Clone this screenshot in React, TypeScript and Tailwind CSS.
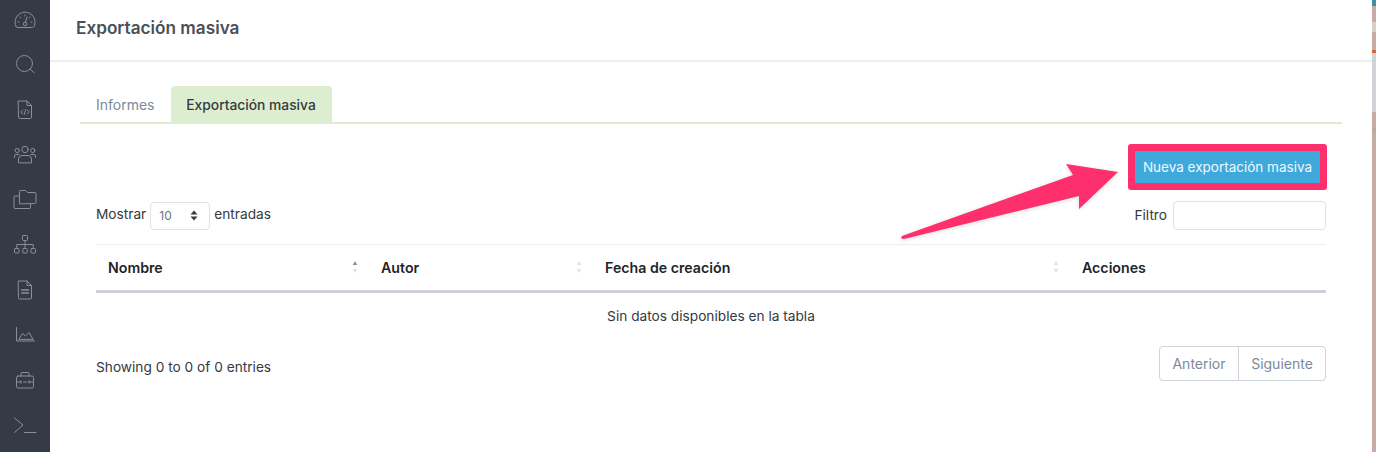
import React from "react";

const NavIcon = ({ children }: { children: React.ReactNode }) => {
  return (
    <div className="flex h-[45px] items-center justify-center">
      <svg
        width="24"
        height="24"
        viewBox="0 0 24 24"
        fill="none"
        stroke="#8a8f99"
        strokeWidth="1"
        strokeLinecap="round"
        strokeLinejoin="round"
      >
        {children}
      </svg>
    </div>
  );
};

const SortArrows = ({ up }: { up?: boolean }) => {
  return (
    <svg width="6" height="14" viewBox="0 0 6 14">
      <path d="M3 1 L5.2 5 L0.8 5 Z" fill={up ? "#868e96" : "#dee2e6"} />
      <path d="M3 13 L5.2 9 L0.8 9 Z" fill="#dee2e6" />
    </svg>
  );
};

const columns = [
  { name: "Nombre", up: true },
  { name: "Autor" },
  { name: "Fecha de creación" },
  { name: "Acciones", hideSort: true },
];

const App = () => {
  return (
    <div className="relative flex h-[452px] w-[1376px] overflow-hidden bg-white font-['Inter',sans-serif] text-[13.7px] text-[#343a40]">
      {/* sidebar */}
      <aside className="w-[50px] shrink-0 bg-[#343a46]">
        <div className="-mt-[3px]">
          <NavIcon>
            <path d="M3 18.5 A10 10 0 1 1 21 18.5 Q20.5 19.5 19.5 19.5 H4.5 Q3.5 19.5 3 18.5 Z" />
            <circle cx="12" cy="16" r="1.8" />
            <path d="M12.5 14.2 L14 9 M12 7 V8 M7 9 L7.7 9.7 M17 9 L16.3 9.7 M5 14 H6 M18 14 H19" />
          </NavIcon>
          <NavIcon>
            <circle cx="11.5" cy="10.5" r="8" />
            <path d="M17.3 16 L21 19.8" />
          </NavIcon>
          <NavIcon>
            <path d="M5.5 3 H14 L18.5 7.5 V19.5 Q18.5 20.5 17.5 20.5 H6.5 Q5.5 20.5 5.5 19.5 Z M14 3 V7.5 H18.5" />
            <path d="M9.7 12 L7.8 14 L9.7 16 M14.3 12 L16.2 14 L14.3 16 M12.7 11.5 L11.3 16.5" />
          </NavIcon>
          <NavIcon>
            <circle cx="12" cy="6.5" r="3.2" />
            <circle cx="4.2" cy="7.5" r="2.1" />
            <circle cx="19.8" cy="7.5" r="2.1" />
            <path d="M5.5 19.5 V16 Q5.5 12.5 9 12.5 H15 Q18.5 12.5 18.5 16 V19.5 Z" />
            <path d="M1.5 14.5 V13 Q1.5 11.5 3 11.5 H6 M22.5 14.5 V13 Q22.5 11.5 21 11.5 H18" />
          </NavIcon>
          <NavIcon>
            <path d="M6.5 15.5 V3.5 Q6.5 2.5 7.5 2.5 H12.5 L14.5 4.5 H22 Q23 4.5 23 5.5 V14.5 Q23 15.5 22 15.5 Z" />
            <path d="M6.5 8 H2 Q1 8 1 9 V19.5 Q1 20.5 2 20.5 H16.5 Q17.5 20.5 17.5 19.5 V15.5" />
          </NavIcon>
          <NavIcon>
            <rect x="9.5" y="2.5" width="5" height="5" rx="0.8" />
            <rect x="1.5" y="15.5" width="4.5" height="4.5" rx="0.8" />
            <rect x="9.8" y="15.5" width="4.5" height="4.5" rx="0.8" />
            <rect x="18" y="15.5" width="4.5" height="4.5" rx="0.8" />
            <path d="M12 7.5 V15.5 M3.8 15.5 V11.5 H20.2 V15.5" />
          </NavIcon>
          <NavIcon>
            <path d="M5.5 3 H14 L18.5 7.5 V20 Q18.5 21 17.5 21 H6.5 Q5.5 21 5.5 20 Z M14 3 V7.5 H18.5" />
            <path d="M8.5 12 H15.5 M8.5 15 H15.5" strokeWidth="1.4" />
          </NavIcon>
          <NavIcon>
            <path d="M3.5 4.5 V18 H21.5" />
            <path d="M6 16 L9.5 10.5 L12.5 13 L16 9.5 L20 16 Z" />
          </NavIcon>
          <NavIcon>
            <path d="M8 8 V5.5 Q8 4.5 9 4.5 H15 Q16 4.5 16 5.5 V8" />
            <rect x="3.5" y="8" width="17" height="12" rx="1.5" />
            <path d="M3.5 14 H8 M10.5 14 H13.5 M16 14 H20.5 M8 12.8 V15.2 M16 12.8 V15.2" />
          </NavIcon>
          <NavIcon>
            <path d="M1.5 5 L10 12 L1.5 19.5 M11.5 19.5 H23" />
          </NavIcon>
        </div>
      </aside>

      <main className="w-[1322px] shrink-0">
        <header className="flex h-[62px] items-center border-b-2 border-[#eeeeee] pb-[5px] pl-[26px]">
          <h1 className="text-[17.2px] font-semibold text-[#495057]">Exportación masiva</h1>
        </header>

        <div className="px-[30px] pt-6">
          {/* tabs */}
          <div className="flex h-[38px] items-stretch border-b-2 border-[#dcedd0] pl-[16px]">
            <a className="flex items-center pr-4 text-[14px] text-[#7c8a9a]">Informes</a>
            <a className="flex w-[161px] items-center justify-center rounded-t bg-[#dcedd0] pt-[2px] text-[13.8px] font-medium text-[#343a40]">
              Exportación masiva
            </a>
          </div>

          <div className="px-4">
            <div className="mt-5 -mr-px flex justify-end">
              <button className="h-[46px] w-[199px] rounded-[3px] border-[7px] border-[#fe2f6d] bg-[#3fa9dc] pt-px text-center text-[13.5px] text-[#f0f8fd]">
                Nueva exportación masiva
              </button>
            </div>

            <div className="mt-[11px] flex h-[29px] items-center justify-between">
              <div className="flex items-center gap-1">
                <span className="pb-[2px]">Mostrar</span>
                <div className="flex h-[28px] w-[60px] items-center justify-between rounded border border-[#dee2e6] px-2 text-xs text-[#6c757d]">
                  <span>10</span>
                  <svg width="8" height="11" viewBox="0 0 8 11" className="mr-[3px]">
                    <path d="M4 0.5 L7.5 4.5 H0.5 Z M4 10.5 L7.5 6.5 H0.5 Z" fill="#343a40" />
                  </svg>
                </div>
                <span className="pb-[2px]">entradas</span>
              </div>
              <div className="flex items-center gap-[6px]">
                <span>Filtro</span>
                <div className="h-[29px] w-[153px] rounded border border-[#dee2e6]" />
              </div>
            </div>

            {/* table */}
            <div className="mt-[14px] border-t border-[#eeeeee]">
              <div className="grid h-[48px] grid-cols-[273px_224px_477px_256px] items-center border-b-[3px] border-[#ced2d8] font-semibold text-[#212529]">
                {columns.map((col) => {
                  return (
                    <div key={col.name} className="flex items-center justify-between pr-[11px] pl-3">
                      <span className="text-[14.2px]">{col.name}</span>
                      {!col.hideSort && <SortArrows up={col.up} />}
                    </div>
                  );
                })}
              </div>
              <div className="flex h-[48px] items-center justify-center pb-[2px]">Sin datos disponibles en la tabla</div>
            </div>

            <div className="mt-[5px] flex h-[35px] items-center justify-between">
              <span className="pt-[8px]">Showing 0 to 0 of 0 entries</span>
              <div className="flex h-[35px] rounded border border-[#ced4da] text-[14px] text-[#7c8a9a]">
                <span className="flex w-[79px] items-center justify-center border-r border-[#ced4da]">Anterior</span>
                <span className="flex w-[86px] items-center justify-center">Siguiente</span>
              </div>
            </div>
          </div>
        </div>
      </main>

      {/* desktop behind the window */}
      <div className="flex flex-1 flex-col bg-[#c8aca4]">
        <div className="h-[6px] bg-[#3f8fa8]" />
        <div className="h-[16px]" />
        <div className="h-[10px] bg-[#d8cfc8]" />
        <div className="h-[18px]" />
        <div className="h-[3px] bg-[#d8672e]" />
        <div className="h-[59px] bg-[#cfd3d8]" />
        <div className="h-[16px]" />
        <div className="h-[6px] bg-[#b9aaa2]" />
      </div>

      {/* annotation arrow */}
      <svg className="absolute top-0 left-0 drop-shadow-sm" width="1376" height="452" fill="none">
        <path
          d="M902 236 L1073 175 L1066 164 L1118 172 L1079 209 L1079 196 L904 239 Q900 239 902 236 Z"
          fill="#fe2f6d"
        />
      </svg>
    </div>
  );
};

export default App;
